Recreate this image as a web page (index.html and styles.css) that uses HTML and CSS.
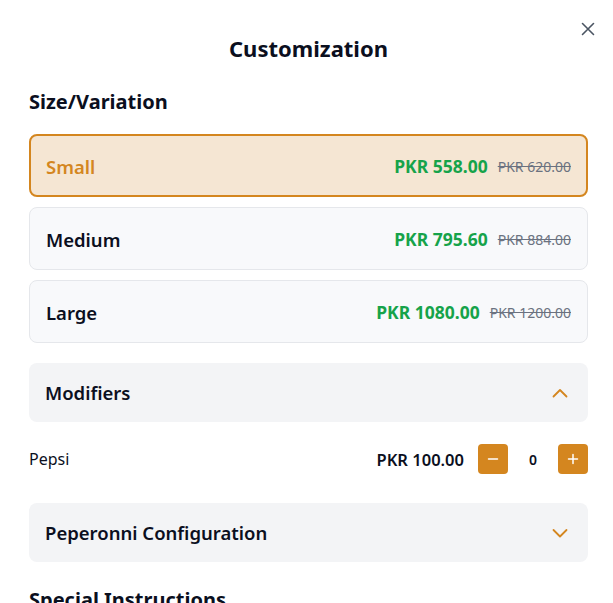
FILE: index.html
```html
<!DOCTYPE html>
<html>
<head>
<meta charset="utf-8">
<link rel="stylesheet" href="styles.css">
</head>
<body>
<div class="modal">
  <button class="close" aria-label="Close">
    <svg width="14" height="14" viewBox="0 0 14 14"><path d="M1.5 1.5L12.5 12.5M12.5 1.5L1.5 12.5" stroke="#4b5563" stroke-width="1.6" stroke-linecap="round"/></svg>
  </button>
  <h1 class="title">Customization</h1>
  <h2 class="section-title">Size/Variation</h2>
  <div class="options">
    <div class="option selected">
      <span class="opt-name">Small</span>
      <span class="prices"><span class="price">PKR 558.00</span><span class="old">PKR 620.00</span></span>
    </div>
    <div class="option">
      <span class="opt-name">Medium</span>
      <span class="prices"><span class="price">PKR 795.60</span><span class="old">PKR 884.00</span></span>
    </div>
    <div class="option">
      <span class="opt-name">Large</span>
      <span class="prices"><span class="price">PKR 1080.00</span><span class="old">PKR 1200.00</span></span>
    </div>
  </div>
  <div class="accordion">
    <span class="acc-title">Modifiers</span>
    <svg class="chev" width="16" height="10" viewBox="0 0 16 10"><path d="M1.5 8.5L8 2L14.5 8.5" fill="none" stroke="#d4861f" stroke-width="1.8" stroke-linecap="round" stroke-linejoin="round"/></svg>
  </div>
  <div class="mod-row">
    <span class="mod-name">Pepsi</span>
    <div class="mod-right">
      <span class="mod-price">PKR 100.00</span>
      <button class="qty-btn"><svg width="12" height="12" viewBox="0 0 12 12"><path d="M1.5 6H10.5" stroke="#fff" stroke-width="1.5" stroke-linecap="round"/></svg></button>
      <span class="qty">0</span>
      <button class="qty-btn"><svg width="12" height="12" viewBox="0 0 12 12"><path d="M1.5 6H10.5M6 1.5V10.5" stroke="#fff" stroke-width="1.5" stroke-linecap="round"/></svg></button>
    </div>
  </div>
  <div class="accordion">
    <span class="acc-title">Peperonni Configuration</span>
    <svg class="chev" width="16" height="10" viewBox="0 0 16 10"><path d="M1.5 2L8 8.5L14.5 2" fill="none" stroke="#d4861f" stroke-width="1.8" stroke-linecap="round" stroke-linejoin="round"/></svg>
  </div>
  <h2 class="section-title special">Special Instructions</h2>
</div>
</body>
</html>
```
FILE: styles.css
```css
* { box-sizing: border-box; }
html, body { margin: 0; padding: 0; background: #fff; }
body {
  font-family: "Noto Sans", "Open Sans", sans-serif;
  color: #0b0f1e;
  overflow: hidden;
  height: 603px;
}
.modal {
  position: relative;
  padding: 28px 25px 0 29px;
}
.close {
  position: absolute;
  top: 22px;
  right: 18px;
  border: 0;
  background: none;
  padding: 0;
  width: 14px;
  height: 14px;
  display: flex;
}
.title {
  margin: 0;
  text-align: center;
  font-size: 22px;
  font-weight: 700;
  line-height: 40px;
}
.section-title {
  margin: 20px 0 0;
  font-size: 20px;
  font-weight: 700;
  line-height: 28px;
}
.options {
  margin-top: 18px;
  display: flex;
  flex-direction: column;
  gap: 10px;
}
.option {
  height: 63px;
  display: flex;
  align-items: center;
  justify-content: space-between;
  padding: 1px 16px 0;
  border: 1px solid #e5e7eb;
  border-radius: 8px;
  background: #f8f9fb;
}
.option.selected {
  border: 2px solid #d4861f;
  background: #f5e6d3;
  padding: 1px 15px 0;
}
.opt-name {
  font-size: 18.5px;
  font-weight: 600;
}
.selected .opt-name { color: #d4861f; }
.prices {
  display: flex;
  align-items: center;
  gap: 10px;
}
.price {
  color: #16a34a;
  font-size: 17.5px;
  font-weight: 700;
}
.old {
  color: #6b7280;
  font-size: 14px;
  text-decoration: line-through;
}
.accordion {
  margin-top: 20px;
  height: 59px;
  background: #f3f4f6;
  border-radius: 8px;
  display: flex;
  align-items: center;
  justify-content: space-between;
  padding: 0 20px 0 16px;
}
.acc-title {
  font-size: 18.5px;
  font-weight: 600;
}
.chev { display: block; }
.mod-row {
  display: flex;
  align-items: center;
  justify-content: space-between;
  margin-top: 22px;
  height: 30px;
}
.mod-row + .accordion { margin-top: 29px; }
.mod-name {
  font-size: 16px;
}
.mod-right {
  display: flex;
  align-items: center;
}
.mod-price {
  font-size: 16.5px;
  font-weight: 600;
  margin-right: 14px;
}
.qty-btn {
  width: 30px;
  height: 30px;
  border: 0;
  border-radius: 4px;
  background: #d4861f;
  display: flex;
  align-items: center;
  justify-content: center;
  padding: 0;
}
.qty {
  width: 50px;
  text-align: center;
  font-size: 14px;
  font-weight: 600;
}
.special {
  margin-top: 24px;
}
```
